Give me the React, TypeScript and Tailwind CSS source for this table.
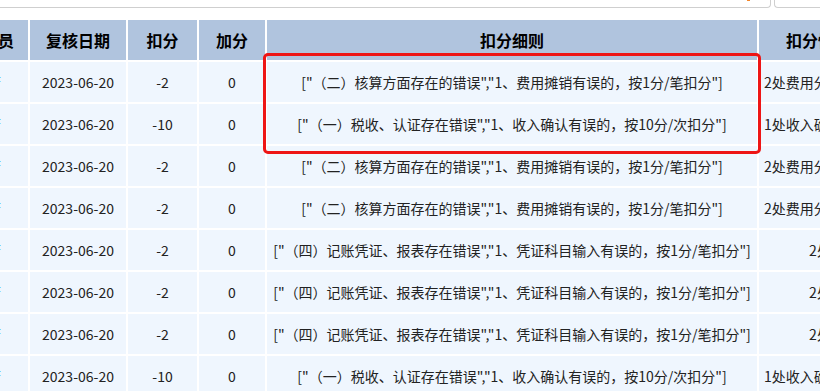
import type { FC } from 'react';

const rows = [
  { rule: '["（二）核算方面存在的错误","1、费用摊销有误的，按1分/笔扣分"]', minus: '-2', note: '2处费用分摊有误，扣2分' },
  { rule: '["（一）税收、认证存在错误","1、收入确认有误的，按10分/次扣分"]', minus: '-10', note: '1处收入确认有误，扣10分' },
  { rule: '["（二）核算方面存在的错误","1、费用摊销有误的，按1分/笔扣分"]', minus: '-2', note: '2处费用分摊有误，扣2分' },
  { rule: '["（二）核算方面存在的错误","1、费用摊销有误的，按1分/笔扣分"]', minus: '-2', note: '2处费用分摊有误，扣2分' },
  { rule: '["（四）记账凭证、报表存在错误","1、凭证科目输入有误的，按1分/笔扣分"]', minus: '-2', note: '2处凭证' },
  { rule: '["（四）记账凭证、报表存在错误","1、凭证科目输入有误的，按1分/笔扣分"]', minus: '-2', note: '2处凭证' },
  { rule: '["（四）记账凭证、报表存在错误","1、凭证科目输入有误的，按1分/笔扣分"]', minus: '-2', note: '2处凭证' },
  { rule: '["（一）税收、认证存在错误","1、收入确认有误的，按10分/次扣分"]', minus: '-10', note: '1处收入确认有误，扣10分' },
];

const headers = ['复核人员', '复核日期', '扣分', '加分', '扣分细则', '扣分情况说明'];

const cell = 'h-[40px] leading-[40px] bg-[#eff6fe] text-center whitespace-nowrap overflow-hidden';

const App: FC = () => {
  return (
    <div
      className="relative w-[820px] h-[391px] overflow-hidden bg-white"
      style={{ fontFamily: '"Noto Sans CJK SC", "Noto Sans", sans-serif' }}
    >
      {/* Filter bar (scrolled up) */}
      <div className="flex items-end h-[8px] overflow-hidden gap-[3px]">
        <div className="flex items-end justify-end flex-1 h-[32px] border-b border-r border-[#cfcfcf] rounded-br-[4px] pr-[20px]">
          <span className="w-[3px] h-[2px] mb-[6px] bg-[#f5872a]" />
        </div>
        <div className="flex items-end w-[46px] h-[32px] border-b border-l border-[#cfcfcf] rounded-bl-[4px] pl-[10px] pb-[9px] text-[13px] leading-[16px] text-[#333] whitespace-nowrap">
          全部状态
        </div>
      </div>

      {/* Table, scrolled horizontally */}
      <div className="mt-[12px] overflow-hidden">
        <div className="grid grid-cols-[92px_96px_69px_66px_490px_150px] gap-[2px] w-max -ml-[64px]">
          {headers.map((h) => (
            <div
              key={h}
              className="h-[40px] leading-[40px] bg-[#b0c4de] text-[16px] font-bold text-black text-center whitespace-nowrap overflow-hidden"
            >
              {h}
            </div>
          ))}
          {rows.map((r, i) => (
            <div key={i} className="contents text-[14px] text-[#222]">
              <div className={`${cell} pr-[4px] text-[#1a8cff]`}>王晓芳</div>
              <div className={cell}>2023-06-20</div>
              <div className={cell}>{r.minus}</div>
              <div className={cell}>0</div>
              <div className={cell}>{r.rule}</div>
              <div className={`${cell} px-[5px]`}>{r.note}</div>
            </div>
          ))}
        </div>
      </div>

      {/* Red highlight annotation */}
      <div className="absolute left-[263px] top-[53px] w-[498px] h-[101px] border-[3px] border-[#ee1515] rounded-[5px] pointer-events-none" />
    </div>
  );
};

export default App;
